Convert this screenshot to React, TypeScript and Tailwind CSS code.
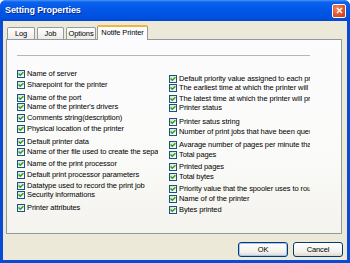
import React from "react";

const leftItems: [string, string][] = [
  ["Name of server", "mt-[13px]"],
  ["Sharepoint for the printer", "mt-[2px]"],
  ["Name of the port", "mt-[4px]"],
  ["Name of the printer's drivers", "mt-0"],
  ["Comments string(description)", "mt-[2px]"],
  ["Physical location of the printer", "mt-[2px]"],
  ["Default printer data", "mt-[4px]"],
  ["Name of ther file used to create the separator page", "mt-px"],
  ["Name of the print processor", "mt-[3px]"],
  ["Default print processor parameters", "mt-[2px]"],
  ["Datatype used to record the print job", "mt-[2px]"],
  ["Security informations", "mt-0"],
  ["Printer attributes", "mt-[4px]"],
];

const rightItems: [string, string][] = [
  ["Default priority value assigned to each print job", "mt-[18px]"],
  ["The earliest time at which the printer will print a job", "mt-0"],
  ["The latest time at which the printer will print a job", "mt-[2px]"],
  ["Printer status", "mt-0"],
  ["Printer satus string", "mt-[5px]"],
  ["Number of print jobs that have been queued", "mt-px"],
  ["Avarage number of pages per minute that have been printed", "mt-[4px]"],
  ["Total pages", "mt-px"],
  ["Printed pages", "mt-[3px]"],
  ["Total bytes", "mt-px"],
  ["Priority value that the spooler uses to route print jobs", "mt-[3px]"],
  ["Name of of the printer", "mt-px"],
  ["Bytes printed", "mt-[2px]"],
];

function CheckBox() {
  return (
    <span className="flex h-[8px] w-[8px] shrink-0 items-center justify-center border border-[#1C5180] bg-[linear-gradient(135deg,#DCDCD7,#FFFFFF)]">
      <svg width="6" height="6" viewBox="0 0 6 6">
        <path d="M0.6 2.6 L2.3 4.3 L5.4 1.2" fill="none" stroke="#21A121" strokeWidth="1.4" />
      </svg>
    </span>
  );
}

function Row({ label, mt }: { label: string; mt: string }) {
  return (
    <div className={`flex h-[9px] w-[141px] items-center overflow-hidden whitespace-nowrap ${mt}`}>
      <CheckBox />
      <span className="ml-[2px] leading-[9px]">{label}</span>
    </div>
  );
}

function Tab({ label, w, ml, active }: { label: string; w: string; ml: string; active?: boolean }) {
  if (active) {
    return (
      <div
        className={`relative z-10 -mb-px flex h-[15px] items-center justify-center rounded-t-[2px] border-x border-t-2 border-x-[#919B9C] border-t-[#F5B43C] bg-[#FCFCFE] pb-[1px] ${w} ${ml}`}
      >
        {label}
      </div>
    );
  }
  return (
    <div
      className={`flex h-[12px] items-center justify-center rounded-t-[2px] border-x border-t border-[#919B9C] bg-[linear-gradient(to_bottom,#FFFFFF,#ECEBE6)] pt-[1px] ${w} ${ml}`}
    >
      {label}
    </div>
  );
}

export default function App() {
  return (
    <div className="flex h-[263px] w-[350px] flex-col overflow-hidden rounded-t-[6px] bg-[#0A4BD6] font-['Liberation_Sans',Arial,sans-serif] text-[7.5px] tracking-[-0.1px] text-black">
      <div className="flex h-[21px] shrink-0 items-center justify-between bg-[linear-gradient(to_bottom,#4A95FA_0%,#0B62EC_10%,#0257E8_45%,#0052E0_80%,#0047D2_100%)] pl-[5px] pr-[4px]">
        <span className="text-[9px] font-bold tracking-[-0.1px] text-white [text-shadow:1px_1px_#0A2A8C]">
          Setting Properties
        </span>
        <div className="flex h-[14px] w-[14px] items-center justify-center rounded-[2px] border border-white bg-[radial-gradient(circle_at_35%_30%,#F08A66,#E0502A_60%,#C0381A)]">
          <svg width="7" height="7" viewBox="0 0 7 7">
            <path d="M1 1 L6 6 M6 1 L1 6" stroke="white" strokeWidth="1.4" />
          </svg>
        </div>
      </div>

      <div className="mx-[3px] mb-[3px] flex flex-1 flex-col bg-[#ECE9D8] pl-[3px] pr-[5px] pt-[4px]">
        <div className="flex h-[14px] items-end pl-[1px]">
          <Tab label="Log" w="w-[28px]" ml="ml-0" />
          <Tab label="Job" w="w-[27px]" ml="ml-[2px]" />
          <Tab label="Options" w="w-[30px]" ml="ml-[2px]" />
          <Tab label="Notife Printer" w="w-[51px]" ml="ml-px" active />
        </div>

        <div className="h-[195px] border border-[#919B9C] bg-[linear-gradient(to_bottom,#FCFCFE_0%,#FAFAF8_60%,#F4F3EE_100%)] pl-[10px]">
          <div className="mt-[15px] h-px w-[293px] bg-[#B9B7AC]" />
          <div className="flex gap-[11px]">
            <div className="flex flex-col">
              {leftItems.map(([label, mt]) => (
                <Row key={label} label={label} mt={mt} />
              ))}
            </div>
            <div className="flex flex-col">
              {rightItems.map(([label, mt]) => (
                <Row key={label} label={label} mt={mt} />
              ))}
            </div>
          </div>
        </div>

        <div className="-mr-px mt-[8px] flex justify-end gap-[5px]">
          <button className="flex h-[15px] w-[50px] items-center justify-center rounded-[3px] border border-[#003C74] bg-[linear-gradient(to_bottom,#FFFFFF,#F2F1EC_70%,#DCD8CC)] shadow-[inset_0_0_0_1px_#A9C4F2]">
            OK
          </button>
          <button className="flex h-[15px] w-[50px] items-center justify-center rounded-[3px] border border-[#003C74] bg-[linear-gradient(to_bottom,#FFFFFF,#F2F1EC_70%,#DCD8CC)]">
            Cancel
          </button>
        </div>
      </div>
    </div>
  );
}
